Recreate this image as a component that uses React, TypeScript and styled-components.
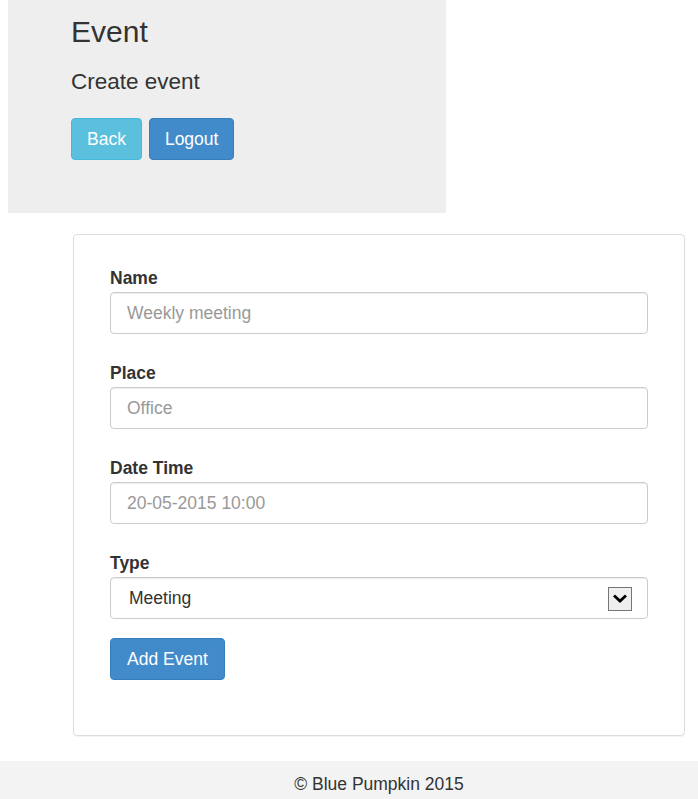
import React from "react";
import styled, { createGlobalStyle } from "styled-components";

const Global = createGlobalStyle`
  html, body { margin: 0; padding: 0; background: #fff; }
  body {
    font-family: "Liberation Sans", Arial, Helvetica, sans-serif;
    color: #333;
    font-size: 17.5px;
  }
  * { box-sizing: border-box; }
`;

const Page = styled.div`
  display: flex;
  flex-direction: column;
  width: 698px;
`;

const Jumbotron = styled.header`
  margin-left: 8px;
  width: 438px;
  height: 213px;
  background: #eee;
  padding: 15px 0 0 63px;
`;

const Title = styled.h1`
  margin: 0;
  font-size: 30px;
  line-height: 33px;
  font-weight: 500;
  color: #333;
`;

const Lead = styled.p`
  margin: 18px 0 0;
  font-size: 22.5px;
  line-height: 32px;
  color: #333;
`;

const ButtonRow = styled.div`
  display: flex;
  gap: 7px;
  margin-top: 20px;
`;

const Button = styled.button<{ $variant: "info" | "primary" }>`
  font-family: inherit;
  font-size: 17.5px;
  line-height: 22px;
  padding: 9px 15px;
  border-radius: 4px;
  color: #fff;
  cursor: pointer;
  background: ${(p) => (p.$variant === "info" ? "#5bc0de" : "#428bca")};
  border: 1px solid ${(p) => (p.$variant === "info" ? "#46b8da" : "#357ebd")};
`;

const Card = styled.section`
  margin: 21px 13px 0 73px;
  height: 502px;
  border: 1px solid #ddd;
  border-radius: 4px;
  box-shadow: 0 1px 1px rgba(0, 0, 0, 0.05);
  padding: 31px 36px 0;
`;

const Form = styled.form`
  display: flex;
  flex-direction: column;
`;

const Group = styled.div`
  display: flex;
  flex-direction: column;
  margin-bottom: 27px;
`;

const Label = styled.label`
  display: block;
  font-weight: 700;
  font-size: 17.5px;
  line-height: 25px;
  margin-bottom: 1px;
  color: #333;
`;

const Input = styled.input`
  width: 100%;
  height: 42px;
  padding: 8px 16px;
  font-family: inherit;
  font-size: 17.5px;
  line-height: 24px;
  color: #555;
  border: 1px solid #ccc;
  border-radius: 4px;
  box-shadow: inset 0 1px 1px rgba(0, 0, 0, 0.075);
  outline: none;
  &::placeholder { color: #999; opacity: 1; }
`;

const SelectBox = styled.div`
  display: flex;
  align-items: center;
  height: 42px;
  padding: 0 15px 0 18px;
  border: 1px solid #ccc;
  border-radius: 4px;
  box-shadow: inset 0 1px 1px rgba(0, 0, 0, 0.075);
`;

const Select = styled.select`
  flex: 1;
  appearance: none;
  -webkit-appearance: none;
  border: none;
  background: transparent;
  font-family: inherit;
  font-size: 17.5px;
  color: #333;
  padding: 0;
  outline: none;
`;

const ArrowBox = styled.span`
  display: flex;
  align-items: center;
  justify-content: center;
  width: 24px;
  height: 24px;
  margin-top: 1px;
  background: #efefef;
  border: 1px solid #767676;
`;

const Submit = styled(Button)`
  align-self: flex-start;
  margin-top: -8px;
  padding: 9px 16px;
`;

const Footer = styled.footer`
  margin-top: 25px;
  height: 38px;
  background: #f3f3f3;
  padding: 12px 0 0 60px;
  text-align: center;
  font-size: 17.5px;
  line-height: 22px;
  color: #333;
`;

export default function App() {
  return (
    <>
      <Global />
      <Page>
        <Jumbotron>
          <Title>Event</Title>
          <Lead>Create event</Lead>
          <ButtonRow>
            <Button $variant="info" type="button">Back</Button>
            <Button $variant="primary" type="button">Logout</Button>
          </ButtonRow>
        </Jumbotron>
        <Card>
          <Form onSubmit={(e) => e.preventDefault()}>
            <Group>
              <Label htmlFor="name">Name</Label>
              <Input id="name" placeholder="Weekly meeting" />
            </Group>
            <Group>
              <Label htmlFor="place">Place</Label>
              <Input id="place" placeholder="Office" />
            </Group>
            <Group>
              <Label htmlFor="dt">Date Time</Label>
              <Input id="dt" placeholder="20-05-2015 10:00" />
            </Group>
            <Group>
              <Label htmlFor="type">Type</Label>
              <SelectBox>
                <Select id="type" defaultValue="Meeting">
                  <option>Meeting</option>
                </Select>
                <ArrowBox>
                  <svg width="16" height="11" viewBox="0 0 16 11">
                    <path d="M2 2.5 L8 8 L14 2.5" stroke="#000" strokeWidth="2.8" fill="none" />
                  </svg>
                </ArrowBox>
              </SelectBox>
            </Group>
            <Submit $variant="primary" type="submit">Add Event</Submit>
          </Form>
        </Card>
        <Footer>© Blue Pumpkin 2015</Footer>
      </Page>
    </>
  );
}
